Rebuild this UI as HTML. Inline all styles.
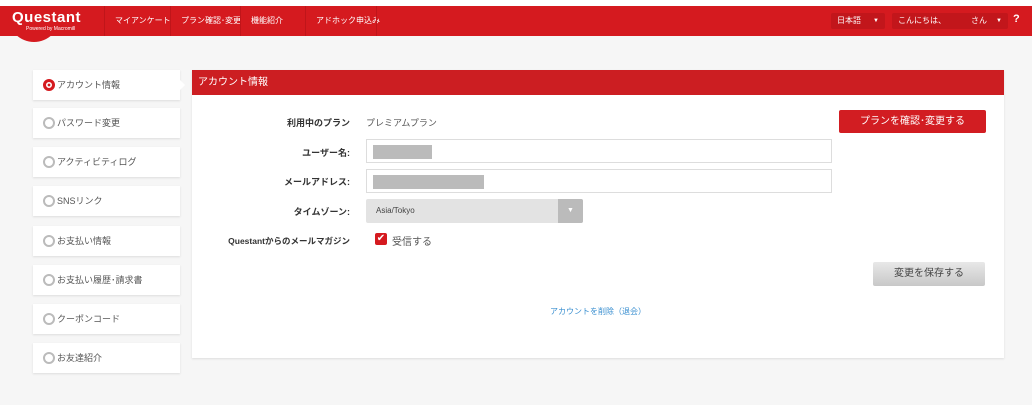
<!DOCTYPE html>
<html><head><meta charset="utf-8"><style>
*{box-sizing:border-box;margin:0;padding:0}
body{width:1036px;height:405px;background:#fff;font-family:"Liberation Sans","Noto Sans CJK JP",sans-serif;position:relative;overflow:hidden}
.bg{position:absolute;left:0;top:36px;width:1032px;height:369px;background:#f6f6f6}
.hdr{position:absolute;left:0;top:6px;width:1032px;height:30px;background:#d51a1f}
.logoc{position:absolute;left:8px;top:6px;width:52px;height:36px;background:#d51a1f;border-radius:0 0 26px 26px}
.logo{position:absolute;left:12px;top:9px;color:#fff;font-weight:bold;font-size:15px;letter-spacing:0.5px}
.pw{position:absolute;left:26px;top:26px;color:#fff;font-size:5px}
.nav{position:absolute;top:6px;height:30px;line-height:30px;color:#fff;font-size:8px;border-left:1px solid #c0151a;padding:0 10px}
.sel{position:absolute;top:13px;height:16px;background:#c2161b;border-radius:2px;color:#fff;font-size:8px;line-height:16px;padding-left:6px}
.side{position:absolute;left:33px;width:147px;height:30px;background:#fff;box-shadow:0 1px 2px #ddd;font-size:9px;color:#555;line-height:30px;padding-left:24px}
.side:before{content:"";position:absolute;left:10px;top:9px;width:12px;height:12px;border:2px solid #bbb;border-radius:50%;box-sizing:border-box}
.side.on:before{border:3px solid #d51a1f;background:radial-gradient(#d51a1f 30%,#fff 35%)}
.side.on:after{content:"";position:absolute;right:-5px;top:10px;border:5px solid transparent;border-left-color:#fff;border-right:0}
.panel{position:absolute;left:192px;top:70px;width:812px;height:288px;background:#fff;box-shadow:0 1px 2px #ddd}
.ptitle{height:25px;background:#cc1e22;color:#fff;font-size:10px;line-height:25px;padding-left:6px}
.lbl{position:absolute;right:686px;font-size:9px;color:#333;font-weight:bold;white-space:nowrap}
.inp{position:absolute;left:366px;width:466px;height:24px;border:1px solid #ddd;background:#fff}
.gr{position:absolute;left:6px;top:5px;height:14px;background:#bbb}
</style></head><body>
<div class="bg"></div>
<div class="hdr"></div>
<div class="logoc"></div>
<div class="logo">Questant</div>
<div class="pw">Powered by Macromill</div>
<div class="nav" style="left:104px">マイアンケート</div>
<div class="nav" style="left:170px">プラン確認･変更</div>
<div class="nav" style="left:240px">機能紹介</div>
<div class="nav" style="left:305px">アドホック申込み</div>
<div class="nav" style="left:376px;padding:0"></div>
<div class="sel" style="left:831px;width:54px">日本語 <span style="position:absolute;right:6px;font-size:6px">▼</span></div>
<div class="sel" style="left:892px;width:116px">こんにちは、<span style="position:absolute;left:79px">さん</span><span style="position:absolute;right:6px;font-size:6px">▼</span></div>
<div style="position:absolute;left:1013px;top:13px;color:#fff;font-weight:bold;font-size:11px">?</div>

<div class="side on" style="top:70px">アカウント情報</div>
<div class="side" style="top:108px">パスワード変更</div>
<div class="side" style="top:147px">アクティビティログ</div>
<div class="side" style="top:186px">SNSリンク</div>
<div class="side" style="top:226px">お支払い情報</div>
<div class="side" style="top:265px">お支払い履歴･請求書</div>
<div class="side" style="top:304px">クーポンコード</div>
<div class="side" style="top:343px">お友達紹介</div>

<div class="panel"><div class="ptitle">アカウント情報</div></div>
<div class="lbl" style="top:116px">利用中のプラン</div>
<div style="position:absolute;left:366px;top:116px;font-size:9px;color:#555">プレミアムプラン</div>
<div style="position:absolute;left:839px;top:110px;width:147px;height:23px;background:#d21d22;border-radius:2px;color:#fff;font-size:10px;text-align:center;line-height:23px">プランを確認･変更する</div>
<div class="lbl" style="top:146px">ユーザー名:</div>
<div class="inp" style="top:139px"><div class="gr" style="width:59px"></div></div>
<div class="lbl" style="top:175px">メールアドレス:</div>
<div class="inp" style="top:169px"><div class="gr" style="width:111px"></div></div>
<div class="lbl" style="top:205px">タイムゾーン:</div>
<div style="position:absolute;left:366px;top:199px;width:217px;height:24px;background:#e3e3e3;border-radius:2px;font-size:8px;color:#444;line-height:24px;padding-left:10px">Asia/Tokyo<div style="position:absolute;right:0;top:0;width:25px;height:24px;background:#bbb;border-radius:0 2px 2px 0;color:#fff;text-align:center;font-size:7px">▼</div></div>
<div class="lbl" style="top:235px;font-size:8.5px">Questantからのメールマガジン</div>
<div style="position:absolute;left:375px;top:233px;width:12px;height:12px;background:#d51a1f;border-radius:2px;color:#fff;font-size:10px;line-height:12px;text-align:center">✔</div>
<div style="position:absolute;left:392px;top:233px;font-size:10px;color:#555">受信する</div>
<div style="position:absolute;left:873px;top:262px;width:112px;height:24px;background:linear-gradient(#e8e8e8,#c8c8c8);border-radius:2px;color:#444;font-size:10px;text-align:center;line-height:24px">変更を保存する</div>
<div style="position:absolute;left:550px;top:306px;font-size:8px;color:#3a8fd0">アカウントを削除（退会）</div>
</body></html>
